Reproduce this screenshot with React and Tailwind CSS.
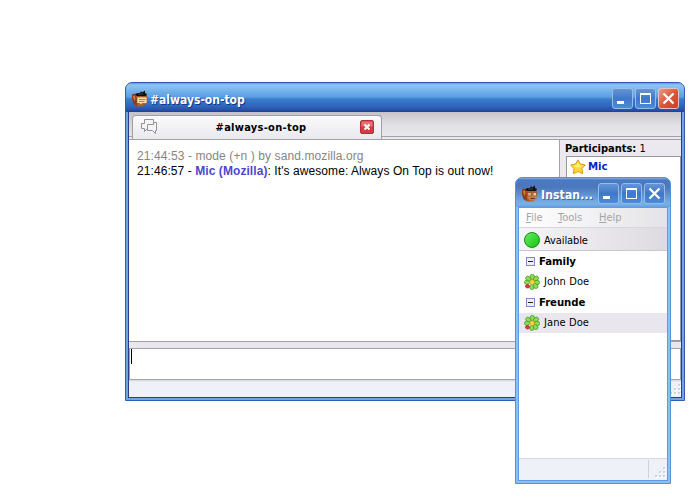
const ui = "font-['DejaVu_Sans_Condensed','DejaVu_Sans',sans-serif]";

function Orc({ hammer }) {
  return (
    <svg width="17" height="17" viewBox="0 0 17 17" className="-mt-[2px] block shrink-0">
      <path d="M0 4.500L3 3.500L8 5L14.500 5L15.500 8L14.500 13L11 16.500H5L1.500 14L0 9Z" fill="#b05a24" />
      <path d="M0 4.500L3 3.500L4.500 8L5 16L1.500 14L0 9Z" fill="#8a3d17" />
      <path d="M0.800 6L3 5.500L3.500 9L2.500 11Z" fill="#cf7e42" />
      <path d="M3 5L5 3L8 3L9 1L10 2.500L13 0.500L13 3L15 4L14 6H5Z" fill="#111" />
      <path d="M6 4H11" stroke="#39414c" />
      {hammer ? (
        <>
          <path d="M5 7H15V13.500H10L8.500 15.500L8 13.500H5Z" fill="#f8deaa" stroke="#8a5524" strokeWidth=".7" />
          <path d="M7 9.500H13.500M7 11.500H12.500" stroke="#a8703a" strokeWidth=".9" />
        </>
      ) : (
        <>
          <path d="M5 7H15V12L13 15.500H8L5 12Z" fill="#c98052" />
          <rect x="5.500" y="7.500" width="4" height="3.500" fill="#dda47a" stroke="#7b3c1a" strokeWidth=".6" />
          <rect x="11" y="7.500" width="3.500" height="3.500" fill="#efc79c" stroke="#7b3c1a" strokeWidth=".6" />
          <path d="M8.500 13.500H13" stroke="#632b12" />
        </>
      )}
    </svg>
  );
}

function TitleButton({ kind, close }) {
  return (
    <div
      className={
        "flex h-[21px] w-[21px] shrink-0 items-center justify-center rounded-[3px] border " +
        (close
          ? "border-[#e6c1c4] bg-linear-to-br from-[#e89a87] via-[#d9583a] to-[#c8401f]"
          : "border-[#94bdea] bg-linear-to-b from-[#6794d3] via-[#3f78cb] to-[#4b8bd9]")
      }
    >
      <svg width="19" height="19" viewBox="0 0 19 19" className="block" shapeRendering="crispEdges">
        {kind === "min" && <rect x="4" y="12" width="7" height="3" fill="#fff" />}
        {kind === "max" && (
          <path d="M4 4H15V15H4ZM5 6V14H14V6Z" fill="#fff" fillRule="evenodd" />
        )}
        {kind === "x" && (
          <path d="M4.500 4.500L14.500 14.500M14.500 4.500L4.500 14.500" stroke="#fff" strokeWidth="2.300" shapeRendering="auto" />
        )}
      </svg>
    </div>
  );
}

function Grip() {
  return (
    <svg width="11" height="11" viewBox="0 0 11 11" className="block" shapeRendering="crispEdges">
      <g fill="#fff">
        <path d="M9 1h2v2H9zM5 5h2v2H5zM9 5h2v2H9zM1 9h2v2H1zM5 9h2v2H5zM9 9h2v2H9z" />
      </g>
      <g fill="#cfd2d6">
        <path d="M8 0h2v2H8zM4 4h2v2H4zM8 4h2v2H8zM0 8h2v2H0zM4 8h2v2H4zM8 8h2v2H8z" />
      </g>
    </svg>
  );
}

function Flower() {
  return (
    <svg width="16" height="16" viewBox="0 0 16 16" className="block shrink-0">
      <g fill="#8edb55" stroke="#45a029" strokeWidth="0.8">
        <ellipse cx="8.300" cy="3" rx="2.200" ry="2.700" />
        <ellipse cx="12" cy="4.700" rx="2.800" ry="2.200" transform="rotate(-42 12 4.700)" />
        <ellipse cx="13" cy="8.500" rx="2.700" ry="2.200" />
        <ellipse cx="11.500" cy="12" rx="2.700" ry="2.200" transform="rotate(48 11.500 12)" />
        <ellipse cx="7.800" cy="13" rx="2.100" ry="2.600" />
        <ellipse cx="4.300" cy="4.700" rx="2.800" ry="2.200" transform="rotate(42 4.300 4.700)" />
        <ellipse cx="3" cy="8.300" rx="2.600" ry="2.100" />
      </g>
      <ellipse cx="3.500" cy="12.300" rx="2" ry="1.700" fill="#e8393f" stroke="#a51b22" strokeWidth=".7" />
      <circle cx="8.200" cy="8.200" r="2.400" fill="#f8d545" stroke="#c99a20" strokeWidth=".8" />
    </svg>
  );
}

function Group({ name }) {
  return (
    <div className="flex h-[21px] items-center pl-[7px]">
      <svg width="9" height="9" viewBox="0 0 9 9" className="block" shapeRendering="crispEdges">
        <rect x=".5" y=".5" width="8" height="8" fill="#eeeef8" stroke="#8583c9" />
        <rect x="2" y="4" width="5" height="1" fill="#222" />
      </svg>
      <span className="ml-[4px] mt-[2px] text-[11.300px] font-bold tracking-[-0.080px]">{name}</span>
    </div>
  );
}

function Contact({ name, selected }) {
  return (
    <div className={"flex h-[20px] items-center pl-[5px] " + (selected ? "bg-[#e9e7ed]" : "")}>
      <Flower />
      <span className="ml-[4px] text-[11px] tracking-[0.100px]">{name}</span>
    </div>
  );
}

function ChatWindow() {
  return (
    <div className="absolute left-[125px] top-[82px] flex h-[319px] w-[560px] flex-col overflow-hidden rounded-t-[7px] border border-[#2e5cb2] bg-[#74a3e3]">
      <div className="flex h-[29px] shrink-0 items-center bg-[linear-gradient(to_bottom,#5b9bdd_0,#8fc6f2_2px,#70aeea_9px,#5c9ee4_14px,#3c7ccb_16px,#2f66bd_23px,#2850a8_27px,#1f3f94_29px)] pl-[6px] pr-[5px] pt-[3px]">
        <Orc hammer />
        <span className="ml-px mt-px grow whitespace-nowrap text-[12px] font-bold text-white [text-shadow:1px_1px_0_#17357f]">
          #always-on-top
        </span>
        <div className="-mt-[2px] flex gap-[2px]">
          <TitleButton kind="min" />
          <TitleButton kind="max" />
          <TitleButton kind="x" close />
        </div>
      </div>
      <div className="mr-[2px] mb-[2px] ml-[2px] flex min-h-0 grow flex-col border border-t-0 border-[#233f8f] bg-[#e9e7ec]">
        <div className="flex h-[28px] shrink-0 flex-col border-b border-[#a3a1aa] bg-[#e9e8ed]">
          <div className="flex h-[27px]">
            <div className="h-[25px] w-[3px] shrink-0 border-b border-[#a3a1aa] bg-linear-to-b from-[#c6c4ca] to-[#e6e5e9]" />
            <div className="h-[27px] bg-linear-to-b from-[#c6c4ca] to-[#e6e5e9]">
              <div className="mt-[3px] flex h-[24px] w-[250px] items-center rounded-t-[4px] border border-b-0 border-[#a09fa6] bg-linear-to-b from-[#fbfbfc] to-[#e9e8ed] pl-[8px]">
                <svg width="17" height="16" viewBox="0 0 17 16" className="-mt-px block shrink-0" fill="#f4f4f6" stroke="#929298">
                  <path d="M3.500 0.500H12.500V9.500H6.500L3.500 12.500V9.500H0.500V4.500H3.500Z" />
                  <path d="M6.500 5.500H12.500V3.500H15.500V11.500H14.500V14.500L11.500 11.500H6.500Z" />
                </svg>
                <span className="mt-px ml-[4px] grow text-center text-[11px] font-bold tracking-[0.280px]">#always-on-top</span>
                <svg width="14" height="14" viewBox="0 0 14 14" className="-mt-px mr-[7px] block shrink-0">
                  <rect x=".5" y=".5" width="13" height="13" rx="1.500" fill="#d23c40" stroke="#ad3338" />
                  <rect x="1.500" y="1.500" width="11" height="5" fill="#e47377" />
                  <path d="M4.500 4.500L9.500 9.500M9.500 4.500L4.500 9.500" stroke="#fff" strokeWidth="2" />
                </svg>
              </div>
            </div>
            <div className="h-[25px] grow border-b border-[#a3a1aa] bg-linear-to-b from-[#c6c4ca] via-[#e0dfe3] to-[#e9e8ec]" />
          </div>
        </div>
        <div className="flex h-[201px] shrink-0">
          <div className="w-[430px] shrink-0 bg-white pl-[8px] pt-[9px] font-['Liberation_Sans',Arial,sans-serif] text-[12px] leading-[15px]">
            <p className="tracking-[0.100px] text-[#858585]">21:44:53 - mode (+n ) by sand.mozilla.org</p>
            <p className="tracking-[0.075px]">
              21:46:57 - <b className="text-[#4d47d0]">Mic (Mozilla)</b>: It's awesome: Always On Top is out now!
            </p>
          </div>
          <div className="flex grow flex-col border-l border-[#a3a1aa] bg-[#ebe8ee] pl-[6px]">
            <p className="-ml-px h-[16px] text-[11px] leading-[17px]">
              <b>Participants:</b> 1
            </p>
            <div className="grow border border-[#96949d] bg-white">
              <div className="flex h-[20px] items-center pl-[3px]">
                <svg width="16" height="16" viewBox="0 0 16 16" className="block">
                  <path
                    d="M8 0.800L10.400 5L15.300 6L12 9.600L12.700 14.600L8 12.600L3.300 14.600L4 9.600L0.700 6L5.600 5Z"
                    fill="#fdd835"
                    stroke="#d59b18"
                    strokeLinejoin="round"
                  />
                  <path d="M8 3L9.500 6.200L13 7L8 8.500L3 7L6.500 6.200Z" fill="#fff08a" />
                </svg>
                <span className="ml-[2px] text-[11.300px] font-bold text-[#0624cc]">Mic</span>
              </div>
            </div>
          </div>
        </div>
        <div className="h-[8px] shrink-0 border-y border-[#a3a1aa] bg-[#e9e6ec]" />
        <div className="flex h-[31px] shrink-0 border-x border-b border-[#a3a1aa] bg-white pl-px">
          <div className="h-[15px] w-px bg-black" />
        </div>
        <div className="flex grow items-end justify-end bg-linear-to-b from-[#d7d9de] via-[#eef1f7] via-15% to-[#eef1f7] pb-[2px]">
          <Grip />
        </div>
      </div>
    </div>
  );
}

function BuddyWindow() {
  return (
    <div className="absolute left-[515px] top-[177px] flex h-[307px] w-[156px] flex-col overflow-hidden rounded-t-[7px] border border-[#5391dc] bg-[#8cc0ed]">
      <div className="-mx-px -mt-px flex h-[30px] shrink-0 items-center rounded-t-[7px] border border-b-0 border-[#3a68b5] bg-[linear-gradient(to_bottom,#85addc_0,#5079bd_2px,#4b77bc_9px,#6398d5_18px,#79b2e8_26px,#669fdf_29px)] pl-[6px] pr-[5px] pt-[3px]">
        <Orc />
        <span className="ml-[2px] mt-px w-0 grow whitespace-nowrap text-[12px] font-bold tracking-[0.150px] text-white [text-shadow:1px_1px_0_#42659d]">
          Instan...
        </span>
        <div className="-mt-px flex gap-[2px]">
          <TitleButton kind="min" />
          <TitleButton kind="max" />
          <TitleButton kind="x" />
        </div>
      </div>
      <div className="mx-[2px] mb-[2px] flex grow flex-col border border-[#5f9ae8] bg-white">
        <div className="flex h-[20px] shrink-0 border-b border-[#d8d6dc] bg-linear-to-r from-white to-[#e4e3e7] pl-[7px] text-[11px] leading-[19px] text-[#a5a4a8]">
          <span className="w-[32px]"><u>F</u>ile</span>
          <span className="w-[41px]"><u>T</u>ools</span>
          <span><u>H</u>elp</span>
        </div>
        <div className="flex h-[23px] shrink-0 items-center border-b border-[#c9c8ce] bg-linear-to-r from-[#f5f4f6] to-[#dddbe1] pl-[5px] pt-px">
          <div className="h-[16px] w-[16px] rounded-full border border-[#168a16] bg-linear-to-br from-[#5ef05a] to-[#0cc10c]" />
          <span className="ml-[4px] mt-[3px] text-[11px] tracking-[-0.100px]">Available</span>
        </div>
        <Group name="Family" />
        <Contact name="John Doe" />
        <Group name="Freunde" />
        <Contact name="Jane Doe" selected />
        <div className="grow" />
        <div className="flex h-[22px] shrink-0 items-end justify-end border-t border-[#d5d7da] bg-[#eef1f7] pb-[2px] pr-px">
          <div className="mr-[6px] h-[18px] w-px bg-[#d0d2d6]" />
          <Grip />
        </div>
      </div>
    </div>
  );
}

export default function App() {
  return (
    <div className={"relative h-[500px] w-[700px] overflow-hidden bg-white text-black " + ui}>
      <ChatWindow />
      <BuddyWindow />
    </div>
  );
}
